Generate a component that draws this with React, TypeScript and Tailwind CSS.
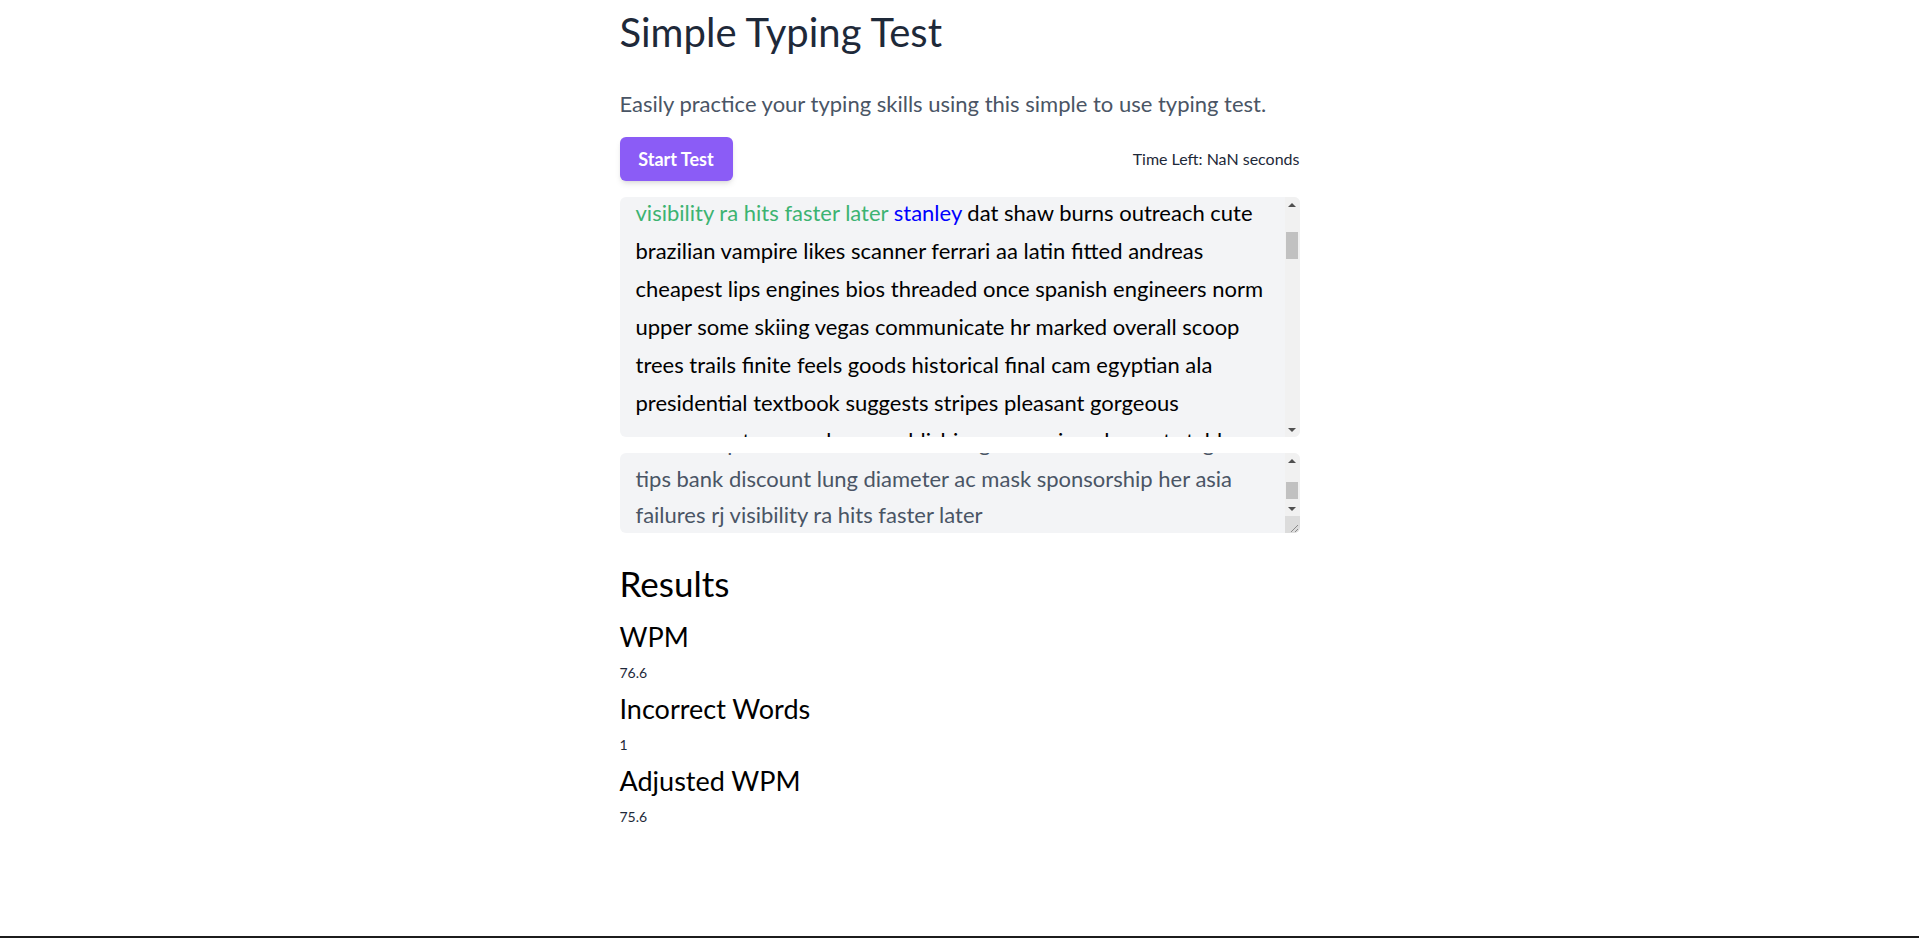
import React, { useEffect, useRef } from 'react'

type Word = { text: string; state: 'correct' | 'wrong' | 'current' | 'pending' }

const doneLines = [
  'tribune quantum glance summary mouse tables vinyl roof plays',
  'crafts scope vessels matched reading shadow breed tracking',
  'tips bank discount lung diameter ac mask sponsorship her',
  'asia failures rj hundreds minister tunes clothing basin',
]

const pendingLines = [
  'brazilian vampire likes scanner ferrari aa latin fitted andreas',
  'cheapest lips engines bios threaded once spanish engineers norm',
  'upper some skiing vegas communicate hr marked overall scoop',
  'trees trails finite feels goods historical final cam egyptian ala',
  'presidential textbook suggests stripes pleasant gorgeous',
  'awareness tours webcam publishing measuring elements table',
  'cricket relay warren signal nature plains garden mortgage tower',
]

const buildLines = (): Word[][] => {
  const lines: Word[][] = []
  doneLines.forEach((l, i) =>
    lines.push(l.split(' ').map((w) => ({ text: w, state: i === 0 && w === 'summary' ? 'wrong' : 'correct' })))
  )
  lines.push([
    ...'visibility ra hits faster later'.split(' ').map((w) => ({ text: w, state: 'correct' as const })),
    { text: 'stanley', state: 'current' },
    ...'dat shaw burns outreach cute'.split(' ').map((w) => ({ text: w, state: 'pending' as const })),
  ])
  pendingLines.forEach((l) => lines.push(l.split(' ').map((w) => ({ text: w, state: 'pending' }))))
  return lines
}

const colorFor: Record<Word['state'], string> = {
  correct: 'text-[#3cb371]',
  wrong: 'text-[#e53935]',
  current: 'text-[#0000ff]',
  pending: 'text-black',
}

const typed =
  'tribune quantum glance summry mouse tables vinyl roof plays\n' +
  'crafts scope vessels matched reading shadow breed tracking\n' +
  'tips bank discount lung diameter ac mask sponsorship her asia\n' +
  'failures rj visibility ra hits faster later'

const stats = [
  { label: 'WPM', value: '76.6' },
  { label: 'Incorrect Words', value: '1' },
  { label: 'Adjusted WPM', value: '75.6' },
]

const ArrowUp = () => (
  <div className="flex h-[15px] items-center justify-center">
    <div className="h-0 w-0 border-x-[4px] border-b-[4px] border-x-transparent border-b-[#505050]" />
  </div>
)

const ArrowDown = () => (
  <div className="flex h-[15px] items-center justify-center">
    <div className="h-0 w-0 border-x-[4px] border-t-[4px] border-x-transparent border-t-[#505050]" />
  </div>
)

const App: React.FC = () => {
  const wordsRef = useRef<HTMLDivElement>(null)
  const inputRef = useRef<HTMLTextAreaElement>(null)
  const lines = buildLines()

  useEffect(() => {
    if (wordsRef.current) wordsRef.current.scrollTop = 167
    if (inputRef.current) inputRef.current.scrollTop = inputRef.current.scrollHeight
  }, [])

  return (
    <div className="min-h-screen border-b-2 border-[#1c1c1c] bg-white font-['Lato',sans-serif]">
      <div className="mx-auto w-[680px] pt-2">
        <h1 className="text-[40px] leading-[48px] text-gray-800">Simple Typing Test</h1>
        <p className="mt-8 text-[22px] leading-8 text-gray-600">
          Easily practice your typing skills using this simple to use typing test.
        </p>

        <div className="mt-[17px] flex items-center justify-between">
          <button className="h-11 w-[113px] rounded-md bg-[#8b5cf6] text-[18px] font-bold text-white shadow-md">
            Start Test
          </button>
          <span className="text-[16px] text-gray-800">Time Left: NaN seconds</span>
        </div>

        {/* Words */}
        <div className="mt-4 flex h-[240px] overflow-hidden rounded-md bg-gray-100">
          <div ref={wordsRef} className="flex-1 overflow-hidden px-4 py-3 text-[22px] leading-[38px]">
            {lines.map((line, i) => (
              <div key={i} className="whitespace-nowrap">
                {line.map((w, j) => (
                  <span key={j} className={colorFor[w.state]}>
                    {w.text}
                    {j < line.length - 1 ? ' ' : ''}
                  </span>
                ))}
              </div>
            ))}
          </div>
          <div className="flex w-[15px] flex-col bg-[#f1f1f1]">
            <ArrowUp />
            <div className="flex-1 pl-[1px] pr-[2px]">
              <div className="mt-[20px] h-[27px] bg-[#c1c1c1]" />
            </div>
            <ArrowDown />
          </div>
        </div>

        {/* Input */}
        <div className="mt-4 flex h-[80px] overflow-hidden rounded-md bg-gray-100">
          <textarea
            ref={inputRef}
            defaultValue={typed}
            className="h-full flex-1 resize-none overflow-hidden bg-transparent px-4 py-0 text-[22px] leading-[36px] text-gray-600 outline-none"
          />
          <div className="flex w-[15px] flex-col bg-[#f1f1f1]">
            <ArrowUp />
            <div className="flex flex-1 flex-col justify-end pb-[2px] pl-[1px] pr-[2px]">
              <div className="h-[17px] bg-[#c1c1c1]" />
            </div>
            <ArrowDown />
            <div className="h-[17px] bg-[#dcdcdc]">
              <svg width="15" height="17" viewBox="0 0 15 17">
                <line x1="13" y1="9" x2="6" y2="16" stroke="#8a8a8a" strokeWidth="1" />
                <line x1="13" y1="13" x2="10" y2="16" stroke="#8a8a8a" strokeWidth="1" />
              </svg>
            </div>
          </div>
        </div>

        {/* Results */}
        <h2 className="mt-7 text-[35px] leading-[44px] text-black">Results</h2>
        <div className="mt-[14px] flex flex-col gap-2">
          {stats.map((s) => (
            <div key={s.label} className="flex flex-col gap-2">
              <h3 className="text-[27px] leading-9 text-black">{s.label}</h3>
              <p className="text-[14px] leading-5 text-gray-800">{s.value}</p>
            </div>
          ))}
        </div>
      </div>
    </div>
  )
}

export default App
